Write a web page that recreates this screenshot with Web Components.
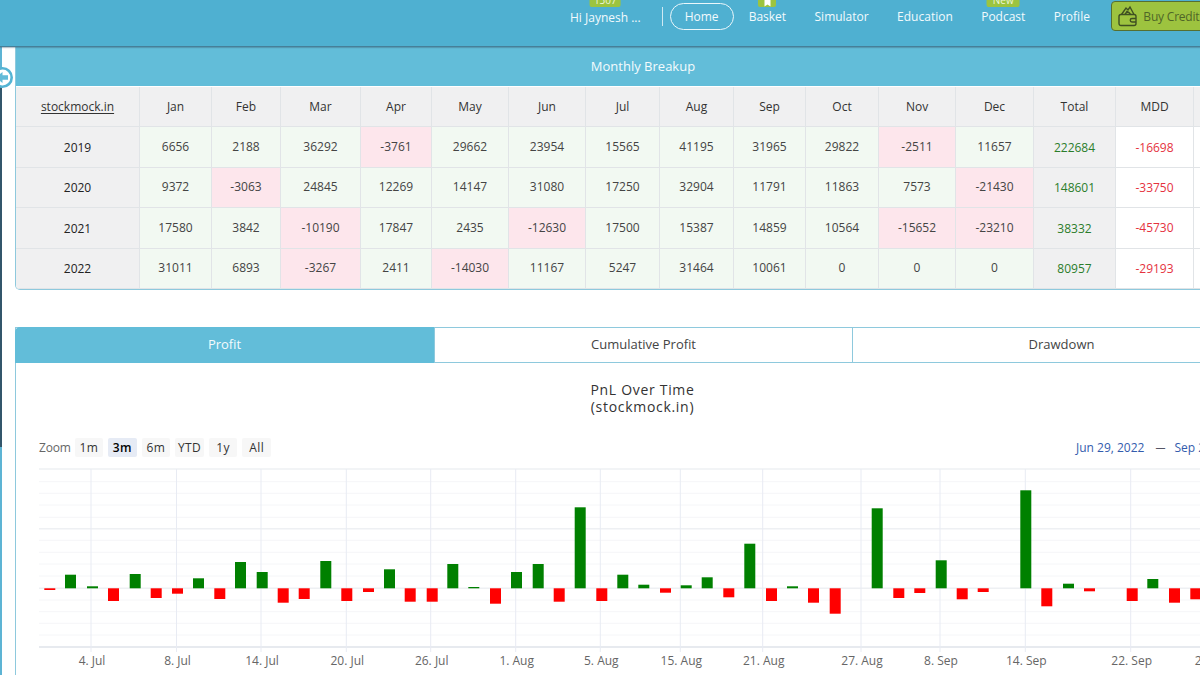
<!DOCTYPE html>
<html>
<head>
<meta charset="utf-8">
<title>Monthly Breakup</title>
<style>
  html, body { margin: 0; padding: 0; height: 675px; overflow: hidden; background: #fff; }
  body { font-family: "Open Sans", "Noto Sans", sans-serif; }
  main-page { width: 1200px; height: 675px; }
</style>
</head>
<body>
<main-page>
  <top-bar></top-bar>
  <breakup-table></breakup-table>
  <chart-panel></chart-panel>
</main-page>

<script>
class MainPage extends HTMLElement {
  constructor () {
    super()
    this.attachShadow({ mode: 'open' }).innerHTML = /*html*/`
      <style>
        :host { display: flex; flex-direction: column; overflow: hidden; position: relative; }
        .body { display: flex; flex: 1; min-height: 0; }
        .strip { display: flex; flex-direction: column; flex: 0 0 2px; }
        .strip .a { height: 21px; background: #5db4d4; }
        .strip .b { height: 379px; background: #33566b; }
        .strip .c { flex: 1; background: #5db4d4; }
        .content { flex: 1; padding-left: 13px; min-width: 0; display: flex; flex-direction: column; gap: 37px; }
        .toggle { position: absolute; left: -8px; top: 67px; width: 21px; height: 21px; }
      </style>
      <slot name="top"></slot>
      <div class="body">
        <div class="strip"><div class="a"></div><div class="b"></div><div class="c"></div></div>
        <div class="content"><slot></slot></div>
      </div>
      <svg class="toggle" viewBox="0 0 21 21">
        <circle cx="10.5" cy="10.5" r="9.2" fill="#fff" stroke="#55b4d4" stroke-width="2.6"/>
        <path d="M4 10.5L10.5 5v3.3H16v4.4h-5.500V16z" fill="#62bbd9"/>
      </svg>
    `
    this.querySelector('top-bar').slot = 'top'
  }
}

class TopBar extends HTMLElement {
  constructor () {
    super()
    this.attachShadow({ mode: 'open' }).innerHTML = /*html*/`
      <style>
        :host { display: flex; align-items: center; height: 46px; flex: none; background: #4fb0d1; border-bottom: 1px solid #467f99; box-shadow: 0 1px 1px rgba(60,90,110,.35); padding-left: 570px; color: #f2fafd; font-size: 12px; white-space: nowrap; position: relative; z-index: 2; overflow: hidden; }
        .row { display: flex; align-items: center; height: 33px; align-self: flex-start; }
        .item { position: relative; }
        .badge { position: absolute; top: -14px; left: 50%; transform: translateX(-50%); background: #9cc43f; color: #eef6d8; font-size: 10px; line-height: 13px; height: 13px; padding: 0 4px; border-radius: 0 0 2px 2px; display: flex; align-items: flex-end; justify-content: center; }
        .user { margin-top: 2px; }
        .sep { width: 1px; height: 19px; background: #cfe9f3; margin: 0 7px 0 21px; }
        .home { border: 1px solid #eaf7fb; border-radius: 14px; height: 25px; width: 62px; display: flex; align-items: center; justify-content: center; margin-right: 15px; }
        .link { margin-right: 28.400px; }
        .buy { display: flex; align-items: center; gap: 6px; align-self: flex-start; margin: 1px 0 0 -7px; width: 200px; height: 30px; flex: none; background: #9dc33f; border: 1px solid #566f31; border-radius: 4px; padding-left: 6px; box-sizing: border-box; color: #4f6627; letter-spacing: -.2px; }
      </style>
      <div class="row">
        <span class="item user">Hi Jaynesh ...<span class="badge" style="top:-15px">1307</span></span>
        <span class="sep"></span>
        <span class="home">Home</span>
        <span class="item link">Basket<span class="badge" style="width:10px">
          <svg width="9" height="9" viewBox="0 0 9 9"><path d="M1.500 0h6v8.500L4.500 6.500 1.500 8.500z" fill="#fff"/></svg></span></span>
        <span class="link">Simulator</span>
        <span class="link">Education</span>
        <span class="item link">Podcast<span class="badge" style="padding:0 6px">New</span></span>
        <span class="link">Profile</span>
        <span class="buy">
          <svg width="19" height="22" viewBox="0 0 19 22" fill="none" stroke="#3f4f22" stroke-width="1.400">
            <path d="M3.500 9.500L8 3l2 2 2-3 4 7.500"/>
            <path d="M7 9.500l2-3 2 1 1.500 2"/>
            <rect x="1" y="9.500" width="17" height="11" rx="2"/>
            <path d="M18 13.500h-4a1.500 1.500 0 0 0 0 3.500h4"/>
          </svg>
          Buy Credits
        </span>
      </div>
    `
  }
}

class BreakupTable extends HTMLElement {
  constructor () {
    super()
    const months = ['Jan','Feb','Mar','Apr','May','Jun','Jul','Aug','Sep','Oct','Nov','Dec']
    const rows = [
      ['2019',[6656,2188,36292,-3761,29662,23954,15565,41195,31965,29822,-2511,11657],222684,-16698],
      ['2020',[9372,-3063,24845,12269,14147,31080,17250,32904,11791,11863,7573,-21430],148601,-33750],
      ['2021',[17580,3842,-10190,17847,2435,-12630,17500,15387,14859,10564,-15652,-23210],38332,-45730],
      ['2022',[31011,6893,-3267,2411,-14030,11167,5247,31464,10061,0,0,0],80957,-29193]
    ]
    const head = months.map(m => `<div class="c h">${m}</div>`).join('')
    const body = rows.map(([year, vals, total, mdd]) => `
      <div class="c h y">${year}</div>
      ${vals.map(v => `<div class="c ${v < 0 ? 'neg' : 'pos'}">${v}</div>`).join('')}
      <div class="c h total">${total}</div>
      <div class="c mdd">${mdd}</div>
      <div class="c"></div>
    `).join('')

    this.attachShadow({ mode: 'open' }).innerHTML = /*html*/`
      <style>
        :host { display: block; width: 1256px; box-sizing: border-box; border: 1px solid #8ec9dd; border-top: 0; border-radius: 0 0 5px 5px; overflow: hidden; font-size: 12px; color: #444; flex: none; }
        .title { height: 39px; box-sizing: border-box; padding-bottom: 2px; background: #62bdd9; color: #f4fbfd; font-size: 13px; display: flex; align-items: center; justify-content: center; }
        .grid { display: grid; grid-template-columns: 124px 72px 69px 80px 71px 77px 77px 74px 74px 72px 73px 77px 78px 82px 78px 1fr; grid-auto-rows: 40.400px; margin-top: 1px; }
        .c { display: flex; align-items: center; justify-content: center; border-right: 1px solid #e1e4e7; border-bottom: 1px solid #e1e4e7; box-sizing: border-box; }
        .h { background: #f0f0f1; color: #333; }
        .y { padding-top: 1px; color: #222; }
        .pos { background: #f2f9f2; padding-bottom: 1px; }
        .neg { background: #fde6ec; padding-bottom: 1px; }
        .total { color: #2b7d2b; padding-top: 1px; }
        .mdd { color: #e5323e; }
        u { text-underline-offset: 2px; }
      </style>
      <div class="title">Monthly Breakup</div>
      <div class="grid">
        <div class="c h"><u>stockmock.in</u></div>
        ${head}
        <div class="c h">Total</div>
        <div class="c h">MDD</div>
        <div class="c h"></div>
        ${body}
      </div>
    `
  }
}

class ChartPanel extends HTMLElement {
  constructor () {
    super()
    this.attachShadow({ mode: 'open' }).innerHTML = /*html*/`
      <style>
        :host { display: block; width: 1256px; flex: none; box-sizing: border-box; border-left: 1px solid #8ec9dd; color: #444; font-size: 13px; }
        .tabs { display: grid; grid-template-columns: 420px 418px 1fr; height: 36px; border-top: 1px solid #8ec9dd; border-bottom: 1px solid #8ec9dd; box-sizing: border-box; margin-left: -1px; }
        .tab { display: flex; align-items: center; justify-content: center; border-right: 1px solid #8ec9dd; padding-bottom: 1px; }
        .tab.on { background: #62bdd9; color: #f4fbfd; border-radius: 5px 0 0 0; margin: -1px 0 -1px 0; }
      </style>
      <div class="tabs">
        <div class="tab on">Profit</div>
        <div class="tab">Cumulative Profit</div>
        <div class="tab">Drawdown</div>
      </div>
      <pnl-chart></pnl-chart>
    `
  }
}

class PnlChart extends HTMLElement {
  constructor () {
    super()
    // [left, end of bar], y values are page pixels from the screenshot
    const zero = 588.3
    const bars = [[44.3,590],[65,574.7],[87,586.3],[108,601],[129.7,574],[150.7,598],[172,593.7],[193,578.3],[214.3,599],[235,562],[256.7,572],[277.7,602.7],[298.7,599],[320.3,561],[341.3,601],[363,592],[384,569.3],[404.7,601.7],[426.7,601.7],[447.3,564],[468.3,587],[490,603.7],[511,572],[532.7,564],[553.7,601.7],[574.7,507.3],[596.3,601],[617.3,574.7],[638.3,584.7],[660,592.7],[680.7,585.3],[701.7,577.3],[723.3,597.3],[744.3,543.7],[766,601],[787,586.3],[808,602.7],[829.7,613.7],[871.7,508.3],[893.3,598],[914.3,593],[935.7,560.3],[956.7,599.3],[977.7,592],[1020.3,490.3],[1041.3,606.3],[1063,583.7],[1084,591.3],[1126.7,601],[1147.3,579],[1169,602.7],[1190.3,599.3]]
    const ticks = [[91,'4. Jul'],[176.5,'8. Jul'],[261,'14. Jul'],[346.3,'20. Jul'],[430.7,'26. Jul'],[515.7,'1. Aug'],[600.3,'5. Aug'],[680.3,'15. Aug'],[762.7,'21. Aug'],[861,'27. Aug'],[940,'8. Sep'],[1025.3,'14. Sep'],[1130.7,'22. Sep'],[1214,'28. Sep']]
    const major = [469, 528.7, 588.3, 647]
    const minor = [481.7,493.3,505,517.3,540.3,552.3,564,576,600,611.7,623.3,635]

    // svg starts at page y 464, x 16
    const X = x => x - 16
    const Y = y => y - 464
    const hline = (y, c, w) => `<line x1="${X(39)}" x2="1240" y1="${Y(y)}" y2="${Y(y)}" stroke="${c}" stroke-width="${w}"/>`

    const svg = `
      ${minor.map(y => hline(y, '#f5f6f8', 1)).join('')}
      ${major.map((y, i) => hline(y, i === 3 ? '#dfe3ea' : '#eef0f3', 1.5)).join('')}
      ${ticks.map(([x]) => `<line x1="${X(x)}" x2="${X(x)}" y1="${Y(469)}" y2="${Y(652)}" stroke="#e8ebf3" stroke-width="1"/>`).join('')}
      ${bars.map(([x, y]) => {
        const up = y < zero
        const top = up ? y : zero
        return `<rect x="${X(x)}" y="${Y(top)}" width="11" height="${Math.abs(y - zero)}" fill="${up ? '#008000' : '#ff0000'}"/>`
      }).join('')}
      ${ticks.map(([x, t]) => `<text x="${X(x) + 1}" y="${Y(665)}" text-anchor="middle">${t}</text>`).join('')}
    `

    const zoom = ['1m','3m','6m','YTD','1y','All'].map(z =>
      `<span class="z${z === '3m' ? ' on' : ''}">${z}</span>`).join('')

    this.attachShadow({ mode: 'open' }).innerHTML = /*html*/`
      <style>
        :host { display: block; font-size: 12px; color: #666; }
        .title { text-align: center; font-size: 14px; line-height: 17px; color: #333; padding-top: 18px; letter-spacing: .7px; padding-right: 2px; }
        .tools { display: flex; align-items: center; height: 20px; margin: 23px 0 0 23px; }
        .label { width: 35.500px; letter-spacing: -.2px; }
        .z { width: 28.600px; height: 19px; margin-right: 5px; background: #f7f7f7; border-radius: 2px; display: flex; align-items: center; justify-content: center; color: #333; letter-spacing: .4px; }
        .z.on { background: #e6ebf5; color: #000; font-weight: 600; }
        .dates { margin-left: auto; display: flex; color: #335cad; width: 195px; white-space: nowrap; }
        .dash { margin: 0 9px 0 11px; color: #556; font-size: 10px; line-height: 16px; }
        svg { display: block; margin-top: 6px; }
        svg text { font-family: "Open Sans", sans-serif; font-size: 12px; fill: #666; }
      </style>
      <div class="title">PnL Over Time<br>(stockmock.in)</div>
      <div class="tools">
        <span class="label">Zoom</span>${zoom}
        <span class="dates"><span>Jun 29, 2022</span><span class="dash">—</span><span>Sep 27, 2022</span></span>
      </div>
      <svg width="1240" height="211" viewBox="0 0 1240 211">${svg}</svg>
    `
  }
}

customElements.define('top-bar', TopBar)
customElements.define('breakup-table', BreakupTable)
customElements.define('pnl-chart', PnlChart)
customElements.define('chart-panel', ChartPanel)
customElements.define('main-page', MainPage)
</script>
</body>
</html>
